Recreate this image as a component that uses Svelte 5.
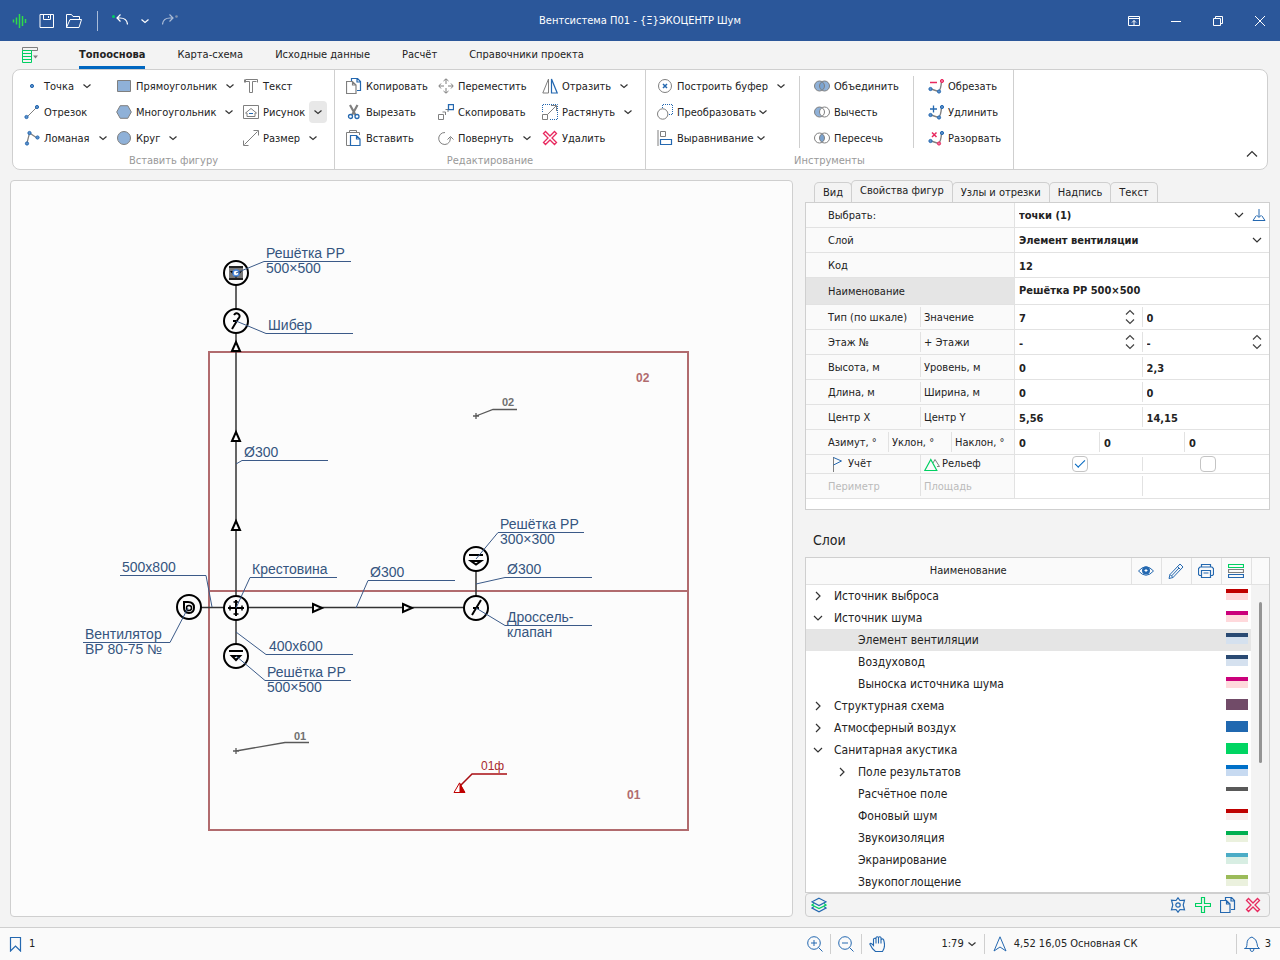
<script lang="ts">
	const B = '#2468b0';
	const G = '#7f7f7f';
	const GR = '#00d062';
	const R = '#e8295f';
	const F = '#8fb1d8';

	const cross = (c: string) =>
		`<path d="M1.5 3.5l2-2L8 6l4.500-4.500 2 2L10 8l4.500 4.500-2 2L8 10l-4.500 4.500-2-2L6 8z" fill="none" stroke="${c}" stroke-width="1.300"/>`;
	const dot = (x: number, y: number, c = B, f = '#5b8fcb') =>
		`<circle cx="${x}" cy="${y}" r="1.600" fill="${f}" stroke="${c}"/>`;
	const venn = (l: string, m: string, r: string) =>
		`<circle cx="5.500" cy="8" r="5" fill="${l}"/><circle cx="10.500" cy="8" r="5" fill="${r}"/><path d="M8 3.700a5 5 0 0 1 0 8.600a5 5 0 0 1 0-8.600z" fill="${m}"/><g fill="none" stroke="${G}"><circle cx="5.500" cy="8" r="5"/><circle cx="10.500" cy="8" r="5"/></g>`;
	const copy = (a: string, b: string) =>
		`<path d="M5.500 3V.5h6l3 3v9H11M11 .5v3.500h3.500" fill="none" stroke="${b}" stroke-width="1.200"/><path d="M.5 3.500h6l3.500 3.500v8.500H.5zM6.500 3.500V7H10" fill="none" stroke="${a}" stroke-width="1.200"/>`;
	const node = (end: string, mark: string) =>
		`<path d="M3 11l7.500 2.500q2.500-2 3-10.500" fill="none" stroke="${G}" stroke-width="1.400"/>${dot(2.5, 11)}${end}${mark}`;

	const icons: Record<string, string> = {
		logo: `<g stroke="#2fdc4a" stroke-width="1.500"><path d="M1.500 6.500v3M4.500 4.500v7M7.500 1v14M10.500 3v10M13.500 6v4"/></g>`,
		save: `<path d="M1 1.500h13.500v13H1zM4.500 1.500v5h7v-5M9.500 3v2" fill="none" stroke="#fff"/>`,
		open: `<path d="M.5 14.500V1.500h5l1.500 2h6.500v3M.5 14.500l3.500-8h11.500l-2.500 8z" fill="none" stroke="#fff"/>`,
		undo: `<circle cx="1.500" cy="3.500" r="1.500" fill="${GR}"/><path d="M15.500 11.500Q15 5 8 5H5M8.500 1.500L5 5l3.500 3.500" fill="none" stroke="#fff" stroke-width="1.200"/>`,
		redo: `<g opacity=".6"><circle cx="14.500" cy="3.500" r="1.300" fill="#bbb"/><path d="M.5 11.500Q1 5 8 5h3M7.500 1.500L11 5 7.500 8.500" fill="none" stroke="#fff" stroke-width="1.200"/></g>`,
		ribbonUp: `<path d="M2.500 3.500h11v9h-11zM2.500 5.500h11M8 12V7.500M6 9.500l2-2 2 2" fill="none" stroke="#fff"/>`,
		min: `<path d="M3 8.500h10" stroke="#fff"/>`,
		restore: `<path d="M3.500 5.500h7v7h-7zM5.500 5.500v-2h7v7h-2" fill="none" stroke="#fff"/>`,
		close: `<path d="M3 3l10 10M13 3L3 13" stroke="#fff"/>`,
		file: `<path d="M.5 .5h15v3H.5z" fill="none" stroke="${G}"/><path d="M.5 3.500h9v12h-9zM.5 6.500h9M.5 9.500h9M.5 12.500h9" fill="none" stroke="${GR}"/><path d="M11 8.500h5l-2.500 3z" fill="${G}"/>`,
		point: dot(8, 8),
		segment: `<path d="M3 13L13 3" stroke="${G}"/>${dot(2.500, 13)}${dot(13, 3)}`,
		polyline: `<path d="M3 13L5.500 3 13 8" fill="none" stroke="${G}" stroke-width="1.200"/>${dot(3, 13.500)}${dot(5.500, 3)}${dot(13.500, 7.500)}`,
		rect: `<path d="M1.500 2.500h13v11h-13z" fill="${F}" stroke="${G}"/>`,
		hexagon: `<path d="M.7 8l3.500-6.300h7.600L15.300 8l-3.500 6.300H4.200z" fill="${F}" stroke="${G}"/>`,
		circle: `<circle cx="8" cy="8" r="6.500" fill="${F}" stroke="${G}"/>`,
		text: `<path d="M2.500 4.500v-3h12v3M1.500 4.500v-3M6.500 14.500v-11h-4M9.500 14.500v-11h4M6.500 14.500h3" fill="none" stroke="${G}"/>`,
		image: `<path d="M.5 1.500h15v13H.5zM4 12.500V9H2.500L8 4.500 13.500 9H12v3.500z" fill="none" stroke="${G}"/><path d="M6 9.500h4" stroke="${B}"/>`,
		size: `<path d="M1.500 14.500l13-13M.5 10.500v5h5M10.500 .5h5v5" fill="none" stroke="${G}"/>`,
		copy: copy(G, B),
		cut: `<path d="M4 1l5.500 10M11.500 1L6 11" stroke="${G}" stroke-width="2.200"/><g fill="none" stroke="${B}" stroke-width="1.300"><circle cx="4.500" cy="12.500" r="2"/><circle cx="11" cy="12.500" r="2"/></g>`,
		paste: `<path d="M4 15.500H.5v-13h13V5M3.500 2.500V.5h7v2" fill="none" stroke="${G}"/><path d="M4.500 5.500h6l3.500 3.500v6.500H4.500zM10.500 5.500V9H14" fill="none" stroke="${B}" stroke-width="1.200"/>`,
		move: `<path d="M8 6V1M8 15v-5M1 8h5M10 8h5M5.500 3L8 .8 10.500 3M5.500 13L8 15.200 10.500 13M3 5.500L.8 8 3 10.500M13 5.500L15.200 8 13 10.500" fill="none" stroke="${G}"/>`,
		duplicate: `<path d="M.5 10.500h5v5h-5zM4.500 8h3v3M7.500 5.500h2.500V8" fill="none" stroke="${G}"/><path d="M10.500 .7h5v5h-5z" fill="none" stroke="${B}" stroke-width="1.300"/>`,
		rotate: `<path d="M7 2.500a6 6 0 1 0 2.500 11.300q3-1.300 3-6.300M9.500 9.500l3-3 3 3" fill="none" stroke="${G}"/>`,
		mirror: `<path d="M6.500 1v14H.8z" fill="none" stroke="${G}"/><path d="M9.500 1v14h5.700z" fill="none" stroke="${B}" stroke-width="1.200"/>`,
		stretch: `<path d="M.5 8V.5h15V15.500H8" fill="none" stroke="${B}" stroke-dasharray="1 1"/><path d="M.5 10.500h5v5h-5zM5.500 10.500L14 2M9 1.500h5.500V7" fill="none" stroke="${G}"/>`,
		delete: cross(R),
		buffer: `<circle cx="8" cy="8" r="6.500" fill="none" stroke="${G}"/><path d="M6 6l4 4M10 6l-4 4" stroke="${B}" stroke-width="1.500"/>`,
		convert: `<path d="M5.500 4V.5h10v10H12" fill="none" stroke="${B}" stroke-dasharray="1 1"/><circle cx="5.700" cy="10" r="5.200" fill="#fff" stroke="${G}"/>`,
		align: `<path d="M1 0v16M3.500 1.500h5v5h-5z" fill="none" stroke="${G}"/><path d="M3.500 9.500h11v5h-11z" fill="none" stroke="${B}" stroke-width="1.200"/>`,
		union: venn(F, '#7ba3cf', F),
		subtract: venn(F, '#fff', '#fff'),
		intersect: venn('#fff', '#7ba3cf', '#fff'),
		trim: node(dot(14, 3, R, '#f2709a') + dot(11, 13.5), `<path d="M2 4.500h7" stroke="${R}" stroke-width="1.500"/>`),
		extend: node(dot(14, 3) + dot(11, 13.5), `<path d="M2 5h7M5.500 1.500v7" stroke="${B}" stroke-width="1.300"/>`),
		break: node(dot(14, 3) + dot(11, 13.5, R, '#f2709a'), `<path d="M4 2.500l4.500 4.500M8.500 2.500L4 7" stroke="${R}" stroke-width="1.500"/>`),
		chevron: `<path d="M4.500 6.500L8 9.500l3.500-3" fill="none" stroke="#333" stroke-width="1.200"/>`,
		chevronWhite: `<path d="M4.500 6.500L8 9.500l3.500-3" fill="none" stroke="#fff" stroke-width="1.200"/>`,
		chevronWide: `<path d="M4 6L8 10l4-4" fill="none" stroke="#333" stroke-width="1.200"/>`,
		chevronUp: `<path d="M3 10.500L8 5.500l5 5" fill="none" stroke="#333" stroke-width="1.200"/>`,
		chevronRight: `<path d="M6 4l4 4-4 4" fill="none" stroke="#333" stroke-width="1.200"/>`,
		spin: `<path d="M4 5.500l4-4 4 4M4 10.500l4 4 4-4" fill="none" stroke="#444" stroke-width="1.200"/>`,
		pick: `<path d="M2 13.500h12l-3-4.500M2 13.500L5 9M8 2v8M5.500 8L8 10.500 10.500 8" fill="none" stroke="${B}"/>`,
		flag: `<path d="M3.500 1v15" stroke="${G}"/><path d="M3.500 1.500l8 3.500-8 4" fill="none" stroke="${B}"/>`,
		relief: `<path d="M9 7l2-3.500 4.500 7H13" fill="none" stroke="${G}"/><path d="M.8 14.500l6-11 6 11z" fill="none" stroke="${GR}" stroke-width="1.200"/>`,
		eye: `<path d="M.5 8Q8-.5 15.500 8 8 16.500 .5 8z" fill="none" stroke="${B}"/><circle cx="8" cy="7.500" r="4" fill="${B}"/><path d="M8 6v3M6.500 7.500h3" stroke="#fff"/>`,
		pencil: `<path d="M1 15.500l1-4L12 1l3 3L5 14.500zM2 11.500l3 3M9.500 3.500l3 3M3.500 13L11 5" fill="none" stroke="${B}"/>`,
		printer: `<path d="M3.500 3.500v-2h9v2M3.500 12.500h-2l-1-1v-6l1.500-1.500h12l1.500 1.500v6l-1 1h-2M3.500 14.500v-7h9v7zM5.500 10h5" fill="none" stroke="${B}" stroke-width="1.200"/>`,
		legend: `<g fill="none" stroke-width="1.200"><path d="M.5 1.500h15v3H.5z" stroke="${GR}"/><path d="M.5 6.500h15v3H.5z" stroke="${G}"/><path d="M.5 11.500h15v3H.5z" stroke="${B}"/></g>`,
		layers: `<g fill="none" stroke-width="1.200"><path d="M3 9.500L1 11l7 3.800 7-3.800-2-1.500" stroke="${B}"/><path d="M3 6.500L1 8l7 3.500L15 8l-2-1.500" stroke="${GR}"/><path d="M8 1.200l7 3.600-7 3.700-7-3.700z" stroke="${B}"/></g>`,
		gear: `<g fill="none" stroke="${B}" stroke-width="1.200"><path d="M8 .8l2 2.700 4.500-.3L13.200 8l1.300 4.800-4.500-.3-2 2.700-2-2.700-4.500.3L2.800 8 1.500 3.200l4.500.3z"/><circle cx="8" cy="8" r="2.200"/></g>`,
		add: `<path d="M6.500 .5h3v6h6v3h-6v6h-3v-6h-6v-3h6z" fill="none" stroke="${GR}" stroke-width="1.200"/>`,
		copyBlue: copy(B, B),
		bookmark: `<path d="M3.500 1.500h10v13.500l-5-5-5 5z" fill="none" stroke="${B}" stroke-width="1.200"/>`,
		zoomIn: `<g fill="none" stroke="${B}"><circle cx="7" cy="7" r="6.300"/><path d="M11.500 11.500l4 4M4 7h6M7 4v6"/></g>`,
		zoomOut: `<g fill="none" stroke="${B}"><circle cx="7" cy="7" r="6.300"/><path d="M11.500 11.500l4 4M4 7h6"/></g>`,
		hand: `<path d="M4.500 9V3q1.300-1.500 2.500 0v4.500V1.500q1.300-1.500 2.500 0v6V1.500q1.300-1.500 2.500 0v6V3.500q1.500-1.300 2.500 0q2.500 7-1 12H6.500Q3 13 .8 8q1-1.800 3.700 1.500z" fill="none" stroke="${B}" stroke-width="1.100"/>`,
		north: `<path d="M8 .8l6 14.200-6-4-6 4z" fill="none" stroke="${B}"/>`,
		bell: `<path d="M.5 12.500h15q-2.500-1-2.500-5T8 1Q3 2.500 3 7.500t-2.500 5zM6 12.500q0 3 2 3t2-3" fill="none" stroke="${B}"/>`
	};

	type Tool = { icon: string; label: string; menu?: 'wide' | 'tight' | 'hot' };
	const t = (icon: string, label: string, menu?: Tool['menu']): Tool => ({ icon, label, menu });

	const groups = [
		{
			id: 'insert',
			title: 'Вставить фигуру',
			columns: [
				[t('point', 'Точка', 'wide'), t('segment', 'Отрезок'), t('polyline', 'Ломаная', 'wide')],
				[t('rect', 'Прямоугольник', 'wide'), t('hexagon', 'Многоугольник', 'wide'), t('circle', 'Круг', 'wide')],
				[t('text', 'Текст'), t('image', 'Рисунок', 'hot'), t('size', 'Размер', 'wide')]
			]
		},
		{
			id: 'edit',
			title: 'Редактирование',
			columns: [
				[t('copy', 'Копировать'), t('cut', 'Вырезать'), t('paste', 'Вставить')],
				[t('move', 'Переместить'), t('duplicate', 'Скопировать'), t('rotate', 'Повернуть', 'wide')],
				[t('mirror', 'Отразить', 'wide'), t('stretch', 'Растянуть', 'wide'), t('delete', 'Удалить')]
			]
		},
		{
			id: 'tools',
			title: 'Инструменты',
			columns: [
				[t('buffer', 'Построить буфер', 'wide'), t('convert', 'Преобразовать', 'tight'), t('align', 'Выравнивание', 'tight')],
				[t('union', 'Объединить'), t('subtract', 'Вычесть'), t('intersect', 'Пересечь')],
				[t('trim', 'Обрезать'), t('extend', 'Удлинить'), t('break', 'Разорвать')]
			]
		}
	];

	const ribbonTabs = ['Топооснова', 'Карта-схема', 'Исходные данные', 'Расчёт', 'Справочники проекта'];
	const sideTabs = ['Вид', 'Свойства фигур', 'Узлы и отрезки', 'Надпись', 'Текст'];
	let ribbonTab = $state(0);
	let sideTab = $state(1);

	type Field = { label: string; value: string; kind?: 'select' | 'spin' | 'check'; icon?: string };
	const rows: { fields: Field[]; pick?: boolean; state?: string }[] = [
		{ fields: [{ label: 'Выбрать:', value: 'точки (1)', kind: 'select' }], pick: true },
		{ fields: [{ label: 'Слой', value: 'Элемент вентиляции', kind: 'select' }] },
		{ fields: [{ label: 'Код', value: '12' }] },
		{ fields: [{ label: 'Наименование', value: 'Решётка РР 500×500' }], state: 'current' },
		{ fields: [{ label: 'Тип (по шкале)', value: '7', kind: 'spin' }, { label: 'Значение', value: '0' }] },
		{ fields: [{ label: 'Этаж №', value: '-', kind: 'spin' }, { label: '+ Этажи', value: '-', kind: 'spin' }] },
		{ fields: [{ label: 'Высота, м', value: '0' }, { label: 'Уровень, м', value: '2,3' }] },
		{ fields: [{ label: 'Длина, м', value: '0' }, { label: 'Ширина, м', value: '0' }] },
		{ fields: [{ label: 'Центр X', value: '5,56' }, { label: 'Центр Y', value: '14,15' }] },
		{ fields: [{ label: 'Азимут, °', value: '0' }, { label: 'Уклон, °', value: '0' }, { label: 'Наклон, °', value: '0' }] },
		{
			fields: [
				{ label: 'Учёт', value: 'on', kind: 'check', icon: 'flag' },
				{ label: 'Рельеф', value: '', kind: 'check', icon: 'relief' }
			],
			state: 'short'
		},
		{ fields: [{ label: 'Периметр', value: '' }, { label: 'Площадь', value: '' }], state: 'disabled' }
	];

	const layers = [
		{ name: 'Источник выброса', level: 0, open: false, line: '#c00000', fill: '#ffd9dc' },
		{ name: 'Источник шума', level: 0, open: true, line: '#cb007b', fill: '#ffd9dc' },
		{ name: 'Элемент вентиляции', level: 1, line: '#2a4a73', fill: '#d5e1ef', selected: true },
		{ name: 'Воздуховод', level: 1, line: '#2a4a73', fill: '#d5e1ef' },
		{ name: 'Выноска источника шума', level: 1, line: '#cb007b', fill: '#ffd9dc' },
		{ name: 'Структурная схема', level: 0, open: false, line: '#714b68', fill: '#714b68' },
		{ name: 'Атмосферный воздух', level: 0, open: false, line: '#2068b0', fill: '#2068b0' },
		{ name: 'Санитарная акустика', level: 0, open: true, line: '#00d562', fill: '#00d562' },
		{ name: 'Поле результатов', level: 1, open: false, line: '#0070c8', fill: '#c7daf1' },
		{ name: 'Расчётное поле', level: 1, line: '#595959', fill: 'transparent' },
		{ name: 'Фоновый шум', level: 1, line: '#c00000', fill: '#faeeee' },
		{ name: 'Звукоизоляция', level: 1, line: '#00b050', fill: '#ebf1de' },
		{ name: 'Экранирование', level: 1, line: '#4bacc6', fill: '#d8eee3' },
		{ name: 'Звукопоглощение', level: 1, line: '#9bbb59', fill: '#ebf1de' }
	];

	// callouts: node -> shelf start, shelf end, text above and below the shelf
	const callouts = [
		{ from: [236, 273], x: 264, y: 261, end: 351, tx: 266, text: ['Решётка РР', '500×500'] },
		{ from: [236, 321], x: 266, y: 333, end: 353, tx: 268, text: ['Шибер'] },
		{ from: [236, 464], x: 242, y: 460, end: 328, tx: 244, text: ['Ø300'] },
		{ from: [212, 607], x: 206, y: 575, end: 120, tx: 122, text: ['500x800'] },
		{ from: [236, 608], x: 250, y: 577, end: 337, tx: 252, text: ['Крестовина'] },
		{ from: [188, 608], x: 170, y: 642, end: 83, tx: 85, text: ['Вентилятор', 'ВР 80-75 №'] },
		{ from: [236, 632], x: 266, y: 654, end: 353, tx: 269, text: ['400x600'] },
		{ from: [236, 656], x: 265, y: 680, end: 351, tx: 267, text: ['Решётка РР', '500×500'] },
		{ from: [356, 608], x: 368, y: 580, end: 455, tx: 370, text: ['Ø300'] },
		{ from: [476, 559], x: 498, y: 532, end: 584, tx: 500, text: ['Решётка РР', '300×300'] },
		{ from: [476, 584], x: 505, y: 577, end: 592, tx: 507, text: ['Ø300'] },
		{ from: [476, 608], x: 505, y: 625, end: 592, tx: 507, text: ['Дроссель-', 'клапан'] }
	];
	const nodes = [[236, 273], [236, 321], [236, 608], [236, 656], [189, 607], [476, 559], [476, 608]];
</script>

{#snippet icon(name: string)}
	<svg class="icon" viewBox="0 0 16 16" aria-hidden="true">{@html icons[name]}</svg>
{/snippet}

<div class="app">
	<header class="titlebar">
		<div class="quick">
			{@render icon('logo')}
			<button aria-label="Сохранить">{@render icon('save')}</button>
			<button aria-label="Открыть">{@render icon('open')}</button>
			<span class="divider"></span>
			<button aria-label="Отменить">{@render icon('undo')}</button>
			<button class="more" aria-label="История">{@render icon('chevronWhite')}</button>
			<button aria-label="Вернуть">{@render icon('redo')}</button>
		</div>
		<h1>Вентсистема П01 - {'{Ξ}'}ЭКОЦЕНТР Шум</h1>
		<div class="window-buttons">
			<button aria-label="Лента">{@render icon('ribbonUp')}</button>
			<button aria-label="Свернуть">{@render icon('min')}</button>
			<button aria-label="Развернуть">{@render icon('restore')}</button>
			<button aria-label="Закрыть">{@render icon('close')}</button>
		</div>
	</header>

	<nav class="ribbon-tabs">
		<button class="file" aria-label="Файл">{@render icon('file')}</button>
		{#each ribbonTabs as tab, i}
			<button class="ribbon-tab" class:active={ribbonTab === i} onclick={() => (ribbonTab = i)}>{tab}</button>
		{/each}
	</nav>

	<section class="ribbon">
		{#each groups as g}
			<div class="group {g.id}">
				<div class="columns">
					{#each g.columns as col}
						<div class="column">
							{#each col as tool}
								<div class="tool">
									<button class="tool-main">{@render icon(tool.icon)}<span>{tool.label}</span></button>
									{#if tool.menu}
										<button class="tool-menu {tool.menu}" aria-label="{tool.label}: меню">{@render icon('chevron')}</button>
									{/if}
								</div>
							{/each}
						</div>
					{/each}
				</div>
				<div class="group-title">{g.title}</div>
			</div>
		{/each}
		<button class="collapse" aria-label="Свернуть ленту">{@render icon('chevronUp')}</button>
	</section>

	<main>
		<section class="canvas">
			<svg width="100%" height="100%">
				<g transform="translate(-11 -181)">
					<g fill="none" stroke="#b16b6e" stroke-width="2">
						<rect x="209" y="352" width="479" height="478" />
						<path d="M209 591H688" />
					</g>
					<path d="M236 273V656M189 607.500H476M476 559V608" stroke="#333" stroke-width="1.500" />
					{#each nodes as [x, y]}
						<circle cx={x} cy={y} r="12" fill="#fcfcfc" stroke="#000" stroke-width="2" />
					{/each}
					<g fill="#fcfcfc" stroke="#000" stroke-width="2">
						{#each [346, 436, 525] as y}
							<path d="M232 {y + 5}L236 {y - 4}L240 {y + 5}z" />
						{/each}
						{#each [318, 408] as x}
							<path d="M{x - 5} 604L{x + 4} 608L{x - 5} 612z" />
						{/each}
					</g>

					<!-- node symbols -->
					<rect x="229" y="266" width="14" height="14" fill="#777" />
					<path d="M229 267h14M229 279h14" stroke="#222" stroke-width="2" />
					<path d="M230 271h12l-6 7z" fill="#000" />
					<circle cx="236" cy="273" r="3" fill="#fff" stroke="#4a8ae0" stroke-width="1.500" />
					<g fill="none" stroke="#000" stroke-width="2">
						<path d="M234 315q2-3 4.500-1t-.5 5l-6 10M233 321h5" />
						<path d="M236 600v16M228 608h16" />
						<path d="M233.500 602h5M233.500 614h5M230 605.500v5M242 605.500v5" stroke-width="1.500" />
						<path d="M229 651h14M469 555h14" />
						<path d="M232 656h8l-4 4zM471 561h10l-5 3.500z" />
						<path d="M481 600l-9 15M473 608h6" />
						<path d="M184 602h4q6 0 6 5.500t-5 5.500q-5-.5-5-5z" />
						<circle cx="189" cy="608" r="2.500" stroke-width="1.500" />
					</g>

					{#each callouts as c}
						<path d="M{c.from[0]} {c.from[1]}L{c.x} {c.y + 0.5}H{c.end}" fill="none" stroke="#3b5a88" />
						{#each c.text as line, i}
							<text class="callout" x={c.tx} y={c.y - 3 + i * 15}>{line}</text>
						{/each}
					{/each}

					<path d="M473 416h6M476 413v6M476 416L493 409.500H517M233 751h6M236 748v6M236 751L285 742.500H309" fill="none" stroke="#595959" stroke-width="1.300" />
					<text class="mark bold" x="502" y="406">02</text>
					<text class="mark bold" x="294" y="740">01</text>
					<text class="room bold" x="636" y="382">02</text>
					<text class="room bold" x="627" y="799">01</text>
					<path d="M460 786L472 774H507" fill="none" stroke="#a80d12" stroke-width="1.500" />
					<path d="M459.500 783l-5.500 9.500h11z" fill="#fff" stroke="#c00000" />
					<path d="M459.500 782v10.500h5.500z" fill="#c00000" />
					<text class="noise" x="481" y="770">01ф</text>
				</g>
			</svg>
		</section>

		<aside>
			<div class="side-tabs">
				{#each sideTabs as tab, i}
					<button class="side-tab" class:active={sideTab === i} onclick={() => (sideTab = i)}>{tab}</button>
				{/each}
			</div>
			<div class="props">
				{#each rows as row, r}
					<div class="row {row.state ?? ''}">
						<div class="names n{row.fields.length}">
							{#each row.fields as f, i}
								<label for="f{r}-{i}">{#if f.icon}{@render icon(f.icon)}{/if}{f.label}</label>
							{/each}
						</div>
						<div class="values">
							{#each row.fields as f, i}
								<div class="value">
									{#if f.kind === 'select'}
										<select id="f{r}-{i}"><option>{f.value}</option></select>
										<span class="arrow">{@render icon('chevronWide')}</span>
									{:else if f.kind === 'check'}
										<input id="f{r}-{i}" type="checkbox" checked={f.value === 'on'} />
									{:else}
										<input id="f{r}-{i}" type="text" value={f.value} disabled={row.state === 'disabled'} />
										{#if f.kind === 'spin'}
											<button class="spin" aria-label="{f.label}: изменить">{@render icon('spin')}</button>
										{/if}
									{/if}
								</div>
							{/each}
							{#if row.pick}
								<button class="pick" aria-label="Указать">{@render icon('pick')}</button>
							{/if}
						</div>
					</div>
				{/each}
			</div>

			<h2>Слои</h2>
			<div class="layers">
				<table>
					<thead>
						<tr>
							<th>Наименование</th>
							{#each ['eye', 'pencil', 'printer', 'legend'] as name}
								<th class="tool-col">{@render icon(name)}</th>
							{/each}
							<th class="scroll-col"></th>
						</tr>
					</thead>
					<tbody>
						{#each layers as layer}
							<tr class:selected={layer.selected}>
								<td colspan="4">
									<div class="layer level{layer.level}">
										<span class="twisty">
											{#if layer.open !== undefined}
												{@render icon(layer.open ? 'chevronWide' : 'chevronRight')}
											{/if}
										</span>
										{layer.name}
									</div>
								</td>
								<td><div class="swatch" style="border-color: {layer.line}; background: {layer.fill}"></div></td>
								<td class="scroll-col"></td>
							</tr>
						{/each}
					</tbody>
				</table>
				<div class="thumb"></div>
			</div>
			<div class="layer-tools">
				<button aria-label="Слои">{@render icon('layers')}</button>
				<span class="grow"></span>
				<button aria-label="Настройки">{@render icon('gear')}</button>
				<button aria-label="Добавить">{@render icon('add')}</button>
				<button aria-label="Копировать слой">{@render icon('copyBlue')}</button>
				<button aria-label="Удалить слой">{@render icon('delete')}</button>
			</div>
		</aside>
	</main>

	<footer>
		<button class="status-item bookmark">{@render icon('bookmark')}1</button>
		<span class="grow"></span>
		<button class="status-item zoom" aria-label="Крупнее">{@render icon('zoomIn')}</button>
		<button class="status-item zoom" aria-label="Мельче">{@render icon('zoomOut')}</button>
		<div class="status-item view">
			<button aria-label="Рука">{@render icon('hand')}</button>
			<button class="scale">1:79{@render icon('chevron')}</button>
		</div>
		<div class="status-item coords">{@render icon('north')}4,52 16,05 Основная СК</div>
		<button class="status-item bell">{@render icon('bell')}3</button>
	</footer>
</div>

<style>
	:global(body) {
		margin: 0;
	}

	.app {
		display: flex;
		flex-direction: column;
		height: 100vh;
		overflow: hidden;
		background: #f3f3f3;
		color: #222;
		font-family: 'DejaVu Sans Condensed', 'DejaVu Sans', sans-serif;
		font-size: 11px;
		line-height: 16px;
	}

	.app * {
		box-sizing: border-box;
	}

	button {
		display: inline-flex;
		align-items: center;
		padding: 0;
		border: 0;
		background: none;
		color: inherit;
		font: inherit;
		white-space: nowrap;
	}

	.icon {
		display: block;
		width: 16px;
		height: 16px;
		flex: none;
	}

	.grow {
		flex: 1;
	}

	/* title bar */
	.titlebar {
		display: grid;
		grid-template-columns: 1fr auto 1fr;
		align-items: center;
		height: 41px;
		flex: none;
		background: #2b579a;
		color: #fff;
	}
	.titlebar h1 {
		margin: 0;
		font: inherit;
	}
	.quick {
		display: flex;
		align-items: center;
		gap: 11px;
		padding-left: 12px;
	}
	.divider {
		width: 1px;
		height: 20px;
		margin: 0 3px 0 4px;
		background: #a9bcd9;
	}
	.quick .more {
		margin: 0 -2px;
	}
	.window-buttons {
		display: flex;
		justify-content: flex-end;
		gap: 26px;
		padding-right: 12px;
	}

	/* ribbon */
	.ribbon-tabs {
		display: flex;
		height: 28px;
		flex: none;
		padding-left: 22px;
	}
	.file {
		margin-right: 25px;
	}
	.ribbon-tab {
		margin: 0 16px;
		border-bottom: 3px solid transparent;
		border-top: 3px solid transparent;
	}
	.ribbon-tab.active {
		border-bottom-color: #0067c0;
		font-weight: bold;
	}

	.ribbon {
		display: flex;
		height: 101px;
		flex: none;
		margin: 0 12px;
		border: 1px solid #cfcfcf;
		border-radius: 8px;
		background: #fff;
	}
	.group {
		flex: none;
		padding: 3px 0 0 11px;
		border-right: 1px solid #cfcfcf;
	}
	.insert {
		width: 322px;
	}
	.edit {
		width: 311px;
	}
	.tools {
		width: 368px;
	}
	.columns {
		display: grid;
		grid-template-columns: 92px 127px 1fr;
	}
	.edit .columns {
		grid-template-columns: 92px 104px 1fr;
	}
	.tools .columns {
		grid-template-columns: 142px 114px 1fr;
	}
	.tools .column + .column {
		margin: 3px 0;
		padding-left: 14px;
		border-left: 1px solid #cfcfcf;
	}
	.tools .column + .column .tool:first-child,
	.tools .column + .column .tool:last-child {
		height: 23px;
	}
	.tools .column + .column .tool:first-child {
		padding-bottom: 3px;
	}
	.tools .column + .column .tool:last-child {
		padding-top: 3px;
	}
	.tool {
		display: flex;
		align-items: center;
		height: 26px;
	}
	.tool-main {
		gap: 4px;
	}
	.tool-main span {
		padding-top: 2px;
	}
	.tool-menu {
		justify-content: center;
		width: 18px;
		height: 22px;
		margin-left: 4px;
		border-radius: 4px;
	}
	.tool-menu.tight {
		margin-left: -2px;
	}
	.tool-menu.hot {
		background: #e8e8e8;
	}
	.group-title {
		margin-left: -11px;
		padding-top: 2px;
		color: #999;
		text-align: center;
	}
	.collapse {
		align-self: flex-end;
		margin: 0 7px 7px auto;
	}

	/* work area */
	main {
		display: grid;
		grid-template-columns: minmax(0, 1fr) 465px;
		gap: 12px;
		flex: 1;
		min-height: 0;
		padding: 10px;
	}
	.canvas {
		overflow: hidden;
		border: 1px solid #cfcfcf;
		border-radius: 4px;
		background: #fcfcfc;
	}
	.canvas svg {
		display: block;
	}
	.canvas text {
		font-family: 'Liberation Sans', Arial, sans-serif;
	}
	.callout {
		font-size: 14px;
		fill: #35557f;
	}
	.mark {
		font-size: 11px;
		fill: #707070;
	}
	.room {
		font-size: 12px;
		fill: #b16b6e;
	}
	.bold {
		font-weight: bold;
	}
	.noise {
		font-size: 12px;
		fill: #a82a2e;
	}

	/* side panel */
	aside {
		display: flex;
		flex-direction: column;
		min-height: 0;
	}
	.side-tabs {
		display: flex;
		align-items: flex-end;
		height: 22px;
		flex: none;
		padding-left: 10px;
	}
	.side-tab {
		height: 20px;
		padding: 0 8px;
		margin-left: -1px;
		border: 1px solid #cfcfcf;
		border-bottom: 0;
		border-radius: 5px 5px 0 0;
	}
	.side-tab.active {
		height: 22px;
		padding-bottom: 2px;
	}

	.props {
		flex: none;
		padding-bottom: 10px;
		border: 1px solid #cfcfcf;
		background: #fff;
	}
	.row {
		display: grid;
		grid-template-columns: 209px 1fr;
		grid-template-rows: 100%;
		height: 25px;
		border-bottom: 1px solid #e2e2e2;
	}
	.row.current {
		height: 27px;
	}
	.row.short {
		height: 19px;
	}
	.names {
		display: grid;
		border-right: 1px solid #e2e2e2;
		background: #fafafa;
	}
	.current .names {
		background: #e5e5e5;
	}
	.n2 {
		grid-template-columns: 114px 1fr;
	}
	.n3 {
		grid-template-columns: 82px 63px 1fr;
	}
	label {
		display: flex;
		align-items: center;
		margin: 2px 0;
		padding: 2px 0 0 3px;
		white-space: nowrap;
	}
	label:first-child {
		padding-left: 22px;
	}
	.names label + label {
		border-left: 1px solid #e2e2e2;
	}
	.short label {
		gap: 2px;
		margin: 0;
		padding-top: 0;
	}
	.short label:first-child {
		padding-left: 24px;
	}
	.disabled label {
		color: #bbb;
	}
	.values {
		display: flex;
		min-width: 0;
	}
	.value {
		display: flex;
		align-items: center;
		flex: 1 1 0;
		min-width: 0;
		margin: 2px 0;
		padding-left: 4px;
	}
	.value + .value {
		border-left: 1px solid #e2e2e2;
	}
	.current .value {
		margin: 0 0 4px;
	}
	.value select,
	.value input[type='text'] {
		flex: 1;
		min-width: 0;
		height: 18px;
		padding: 2px 0 0;
		border: 0;
		appearance: none;
		background: none;
		color: #222;
		font: inherit;
		font-weight: bold;
	}
	.arrow {
		margin: 0 4px 0 -16px;
		pointer-events: none;
	}
	.spin {
		margin-right: 4px;
	}
	.pick {
		margin-right: 2px;
	}
	input[type='checkbox'] {
		width: 16px;
		height: 16px;
		margin: 0 auto;
		appearance: none;
		border: 1px solid #c4c4c4;
		border-radius: 4px;
		background: #fff;
	}
	input[type='checkbox']:checked::before {
		content: '';
		display: block;
		width: 9px;
		height: 4px;
		margin: 3px 2px;
		border: solid #0067c0;
		border-width: 0 0 1px 1px;
		transform: rotate(-45deg);
	}

	h2 {
		flex: none;
		margin: 20px 0 7px 8px;
		font-size: 14px;
		font-weight: normal;
		line-height: 20px;
	}

	.layers {
		position: relative;
		flex: 1;
		min-height: 0;
		overflow: hidden;
		border: 1px solid #cfcfcf;
		background: #fff;
	}
	table {
		width: 100%;
		border-collapse: collapse;
		table-layout: fixed;
	}
	th {
		height: 26px;
		padding: 0;
		border-bottom: 1px solid #e2e2e2;
		background: #fafafa;
		font-weight: normal;
	}
	.tool-col {
		width: 30px;
		border-left: 1px solid #e2e2e2;
	}
	.tool-col .icon {
		margin: 0 auto;
	}
	th.scroll-col {
		width: 18px;
		border-left: 1px solid #e2e2e2;
	}
	td {
		height: 22px;
		padding: 0;
	}
	td.scroll-col {
		background: #f3f3f3;
	}
	.selected td:not(.scroll-col) {
		background: #e5e5e5;
	}
	.layer {
		display: flex;
		align-items: center;
		height: 22px;
		padding-left: 4px;
		font-size: 12px;
	}
	.level1 {
		padding-left: 28px;
	}
	.twisty {
		width: 16px;
		height: 16px;
		margin-right: 8px;
	}
	.swatch {
		width: 22px;
		height: 11px;
		margin: 0 3px 3px auto;
		border-top: 4px solid;
	}
	.thumb {
		position: absolute;
		top: 44px;
		right: 7px;
		width: 3px;
		height: 161px;
		border-radius: 2px;
		background: #949494;
	}
	.layer-tools {
		display: flex;
		align-items: center;
		gap: 9px;
		height: 24px;
		flex: none;
		padding: 0 8px 0 5px;
		border: 1px solid #cfcfcf;
		border-radius: 4px;
	}

	/* status bar */
	footer {
		display: flex;
		align-items: center;
		height: 33px;
		flex: none;
		border-top: 1px solid #cfcfcf;
		background: #fafafa;
	}
	.status-item {
		display: flex;
		align-items: center;
		height: 20px;
	}
	.bookmark {
		gap: 6px;
		padding-left: 7px;
	}
	.zoom {
		width: 31px;
		padding-right: 7px;
		justify-content: flex-end;
		border-right: 1px solid #cfcfcf;
	}
	.view {
		justify-content: space-between;
		width: 123px;
		padding: 0 4px 0 7px;
		border-right: 1px solid #cfcfcf;
	}
	.coords {
		gap: 6px;
		width: 252px;
		padding-left: 7px;
		border-right: 1px solid #cfcfcf;
	}
	.bell {
		gap: 5px;
		padding: 0 9px 0 7px;
	}
</style>
